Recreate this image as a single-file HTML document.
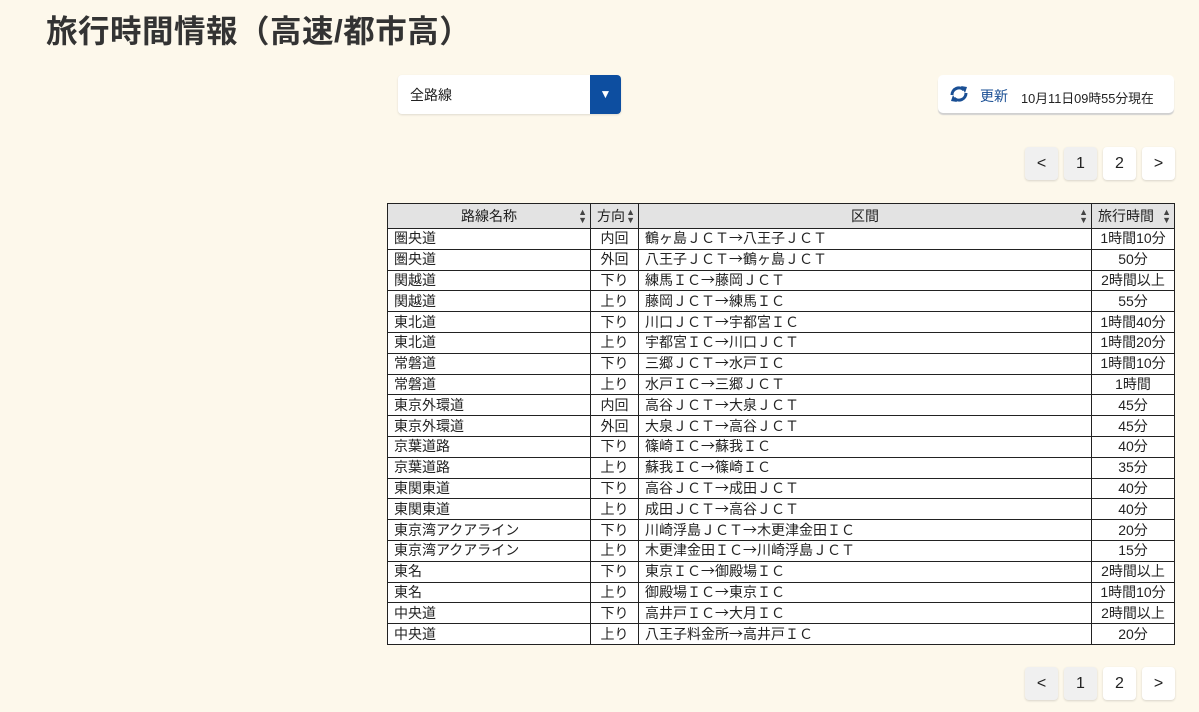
<!DOCTYPE html>
<html><head><meta charset="utf-8"><style>
body{margin:0;width:1199px;height:712px;background:#fdf8eb;font-family:"Liberation Sans","Noto Sans CJK JP",sans-serif;color:#222;position:relative;overflow:hidden}
h1{position:absolute;left:46px;top:6px;margin:0;font-size:31.5px;font-weight:bold;color:#333;letter-spacing:0.5px}
.sel{position:absolute;left:398px;top:75px;width:223px;height:39px;background:#fff;border-radius:4px;box-shadow:0 1px 2px rgba(0,0,0,.12)}
.sel span{position:absolute;left:12px;top:10px;font-size:14px}
.sel b{position:absolute;right:0;top:0;width:31px;height:39px;background:#0d4ea0;border-radius:0 4px 4px 0;color:#fff;font-size:12px;text-align:center;line-height:39px}
.upd{position:absolute;left:938px;top:75px;width:236px;height:38px;background:#fff;border-radius:5px;box-shadow:0 2px 1px #d0d0d0}
.upd .t{position:absolute;left:42px;top:11px;font-size:14px;color:#1a4f94}
.upd .d{position:absolute;left:83px;top:13px;font-size:12.8px;color:#222}
.pg{position:absolute;display:flex;gap:6px}
.pg div{width:33px;height:33px;border-radius:4px;background:#fff;box-shadow:0 1px 2px rgba(0,0,0,.15);text-align:center;line-height:33px;font-size:16px;color:#222}
.pg div.g{background:#f0f0f0}
table{position:absolute;left:387px;top:203px;width:788px;border-collapse:collapse;font-size:14px}
td,th{border:1px solid #222;height:19.8px;padding:0 6px;line-height:19px;white-space:nowrap}
th{background:#e3e3e3;font-weight:normal;height:24px;text-align:center;position:relative}
th i{position:absolute;right:3px;top:4px;font-style:normal;font-size:9px;line-height:8px;color:#444}
td:nth-child(2),td:nth-child(4){text-align:center}
td{background:#fff}
td:nth-child(3){font-family:"Noto Sans CJK JP",sans-serif;line-height:19px}
</style></head><body>
<h1>旅行時間情報（高速/都市高）</h1>
<div class="sel"><span>全路線</span><b>▼</b></div>
<div class="upd"><svg style="position:absolute;left:10px;top:8px" width="22" height="22" viewBox="0 0 22 22"><path d="M4 12a7 7 0 0 1 12-5" fill="none" stroke="#1a4f94" stroke-width="3"/><path d="M13 3l6 1-2 6z" fill="#1a4f94"/><path d="M18 10a7 7 0 0 1-12 5" fill="none" stroke="#1a4f94" stroke-width="3"/><path d="M9 19l-6-1 2-6z" fill="#1a4f94"/></svg><span class="t">更新</span><span class="d">10月11日09時55分現在</span></div>
<div class="pg" style="left:1025px;top:147px"><div class="g">&lt;</div><div class="g">1</div><div>2</div><div>&gt;</div></div>
<div class="pg" style="left:1025px;top:667px"><div class="g">&lt;</div><div class="g">1</div><div>2</div><div>&gt;</div></div>
<table>
<tr><th style="width:190px">路線名称<i>▲<br>▼</i></th><th style="width:35px;text-align:left;padding-left:6px">方向<i>▲<br>▼</i></th><th style="width:440px">区間<i>▲<br>▼</i></th><th style="text-align:left">旅行時間<i>▲<br>▼</i></th></tr>
<tr><td>圏央道</td><td>内回</td><td>鶴ヶ島ＪＣＴ→八王子ＪＣＴ</td><td>1時間10分</td></tr>
<tr><td>圏央道</td><td>外回</td><td>八王子ＪＣＴ→鶴ヶ島ＪＣＴ</td><td>50分</td></tr>
<tr><td>関越道</td><td>下り</td><td>練馬ＩＣ→藤岡ＪＣＴ</td><td>2時間以上</td></tr>
<tr><td>関越道</td><td>上り</td><td>藤岡ＪＣＴ→練馬ＩＣ</td><td>55分</td></tr>
<tr><td>東北道</td><td>下り</td><td>川口ＪＣＴ→宇都宮ＩＣ</td><td>1時間40分</td></tr>
<tr><td>東北道</td><td>上り</td><td>宇都宮ＩＣ→川口ＪＣＴ</td><td>1時間20分</td></tr>
<tr><td>常磐道</td><td>下り</td><td>三郷ＪＣＴ→水戸ＩＣ</td><td>1時間10分</td></tr>
<tr><td>常磐道</td><td>上り</td><td>水戸ＩＣ→三郷ＪＣＴ</td><td>1時間</td></tr>
<tr><td>東京外環道</td><td>内回</td><td>高谷ＪＣＴ→大泉ＪＣＴ</td><td>45分</td></tr>
<tr><td>東京外環道</td><td>外回</td><td>大泉ＪＣＴ→高谷ＪＣＴ</td><td>45分</td></tr>
<tr><td>京葉道路</td><td>下り</td><td>篠崎ＩＣ→蘇我ＩＣ</td><td>40分</td></tr>
<tr><td>京葉道路</td><td>上り</td><td>蘇我ＩＣ→篠崎ＩＣ</td><td>35分</td></tr>
<tr><td>東関東道</td><td>下り</td><td>高谷ＪＣＴ→成田ＪＣＴ</td><td>40分</td></tr>
<tr><td>東関東道</td><td>上り</td><td>成田ＪＣＴ→高谷ＪＣＴ</td><td>40分</td></tr>
<tr><td>東京湾アクアライン</td><td>下り</td><td>川崎浮島ＪＣＴ→木更津金田ＩＣ</td><td>20分</td></tr>
<tr><td>東京湾アクアライン</td><td>上り</td><td>木更津金田ＩＣ→川崎浮島ＪＣＴ</td><td>15分</td></tr>
<tr><td>東名</td><td>下り</td><td>東京ＩＣ→御殿場ＩＣ</td><td>2時間以上</td></tr>
<tr><td>東名</td><td>上り</td><td>御殿場ＩＣ→東京ＩＣ</td><td>1時間10分</td></tr>
<tr><td>中央道</td><td>下り</td><td>高井戸ＩＣ→大月ＩＣ</td><td>2時間以上</td></tr>
<tr><td>中央道</td><td>上り</td><td>八王子料金所→高井戸ＩＣ</td><td>20分</td></tr>
</table>
</body></html>
